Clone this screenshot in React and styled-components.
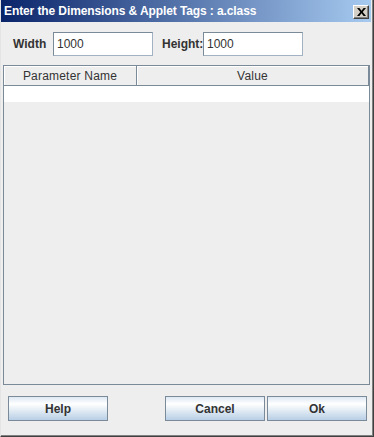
import React from 'react';
import styled, { createGlobalStyle } from 'styled-components';

const GlobalStyle = createGlobalStyle`
    html, body {
        margin: 0;
        padding: 0;
        background: #ffffff;
    }

    body {
        font-family: "Liberation Sans", Arial, sans-serif;
    }
`;

const Window = styled.div`
    display: flex;
    flex-direction: column;
    box-sizing: border-box;
    width: 374px;
    height: 437px;
    padding: 0 2px 2px 0;
    background: #eeeeee;
    border-left: 1px solid #e4e4e4;
    border-right: 1px solid #404040;
    border-bottom: 1px solid #404040;
    box-shadow: inset -1px -1px 0 #808080;
`;

const TitleBar = styled.div`
    display: flex;
    align-items: center;
    justify-content: space-between;
    height: 22px;
    padding: 0 2px 0 3px;
    box-sizing: border-box;
    background: linear-gradient(to right, #0a246a, #a6caf0);
`;

const Title = styled.div`
    color: #ffffff;
    font-weight: bold;
    font-size: 12px;
    letter-spacing: -0.1px;
`;

const CloseButton = styled.div`
    display: flex;
    align-items: center;
    justify-content: center;
    box-sizing: border-box;
    width: 16px;
    height: 14px;
    margin-top: 1px;
    background: #d4d0c8;
    border-top: 1px solid #ffffff;
    border-left: 1px solid #ffffff;
    border-right: 1px solid #404040;
    border-bottom: 1px solid #404040;
    box-shadow: inset -1px -1px 0 #808080;
`;

const Body = styled.div`
    display: flex;
    flex-direction: column;
    flex: 1;
    padding: 0 1px 0 2px;
`;

const FieldsRow = styled.div`
    display: flex;
    align-items: center;
    padding: 10px 0 9px 10px;
`;

const Label = styled.label`
    width: ${({ w }) => w}px;
    margin-left: ${({ gap }) => gap || 0}px;
    font-size: 12px;
    font-weight: bold;
    color: #333333;
`;

const Field = styled.div`
    display: flex;
    align-items: center;
    box-sizing: border-box;
    width: 100px;
    height: 24px;
    padding-left: 3px;
    background: #ffffff;
    border: 1px solid #7a8a99;
    border-right-color: #a3b2c2;
    border-bottom-color: #a3b2c2;
    font-size: 12px;
    color: #333333;
`;

const Table = styled.div`
    display: flex;
    flex-direction: column;
    flex: 1;
    border: 1px solid #7a8a99;
    background: #eeeeee;
`;

const HeaderRow = styled.div`
    display: flex;
    height: 20px;
`;

const HeaderCell = styled.div`
    display: flex;
    align-items: center;
    justify-content: center;
    box-sizing: border-box;
    width: ${({ w }) => (w ? `${w}px` : 'auto')};
    flex: ${({ w }) => (w ? 'none' : 1)};
    border-right: 1px solid #7a8a99;
    border-bottom: 1px solid #7a8a99;
    box-shadow: inset 1px 1px 0 #ffffff;
    font-size: 12px;
    letter-spacing: 0.2px;
    color: #333333;
`;

const EmptyRow = styled.div`
    height: 16px;
    background: #ffffff;
`;

const ButtonRow = styled.div`
    display: flex;
    justify-content: space-between;
    padding: 11px 3px 13px 5px;
`;

const ButtonGroup = styled.div`
    display: flex;
    gap: 2px;
`;

const Button = styled.button`
    box-sizing: border-box;
    width: 100px;
    height: 25px;
    padding: 0;
    background: linear-gradient(to bottom, #dde8f3 0%, #ffffff 30%, #b8cfe5 100%);
    border: 1px solid #7a8a99;
    font-family: "Liberation Sans", Arial, sans-serif;
    font-size: 12px;
    font-weight: bold;
    color: #333333;
`;

const App = () => (
    <>
        <GlobalStyle />
        <Window>
            <TitleBar>
                <Title>Enter the Dimensions &amp; Applet Tags : a.class</Title>
                <CloseButton>
                    <svg width="9" height="8" viewBox="0 0 9 8">
                        <path d="M0 0h2.4l2.1 2.7L6.6 0H9L5.7 4 9 8H6.6L4.5 5.3 2.4 8H0l3.3-4z" fill="#000" />
                    </svg>
                </CloseButton>
            </TitleBar>
            <Body>
                <FieldsRow>
                    <Label w={40}>Width</Label>
                    <Field>1000</Field>
                    <Label w={41} gap={9}>Height:</Label>
                    <Field>1000</Field>
                </FieldsRow>
                <Table>
                    <HeaderRow>
                        <HeaderCell w={133}>Parameter Name</HeaderCell>
                        <HeaderCell>Value</HeaderCell>
                    </HeaderRow>
                    <EmptyRow />
                </Table>
                <ButtonRow>
                    <Button>Help</Button>
                    <ButtonGroup>
                        <Button>Cancel</Button>
                        <Button>Ok</Button>
                    </ButtonGroup>
                </ButtonRow>
            </Body>
        </Window>
    </>
);

export default App;
